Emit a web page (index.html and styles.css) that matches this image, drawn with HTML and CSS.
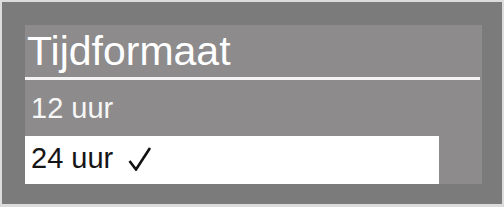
FILE: index.html
```html
<!DOCTYPE html>
<html lang="nl">
<head>
  <meta charset="UTF-8">
  <title>Tijdformaat</title>
  <link rel="stylesheet" href="styles.css">
</head>
<body>
  <div class="frame">
    <div class="panel">
      <h1 class="panel-title">Tijdformaat</h1>
      <div class="option">12 uur</div>
      <div class="option selected">
        <span>24 uur</span>
        <svg class="check" width="24" height="24" viewBox="0 0 24 24">
          <path d="M1.5 14 L8 22.5 L22 1" fill="none" stroke="#111" stroke-width="2.6" stroke-linejoin="miter"/>
        </svg>
      </div>
    </div>
  </div>
</body>
</html>
```

FILE: styles.css
```css
/* Reset */
* {
  margin: 0;
  padding: 0;
  box-sizing: border-box;
}

body {
  background: #dcdcdc;
  font-family: "Liberation Sans", Arial, sans-serif;
  width: 504px;
  height: 207px;
  padding: 2px 2px 3px 2px;
  overflow: hidden;
}

/* Outer frame */
.frame {
  background: #7b7b7b;
  width: 500px;
  height: 202px;
  padding: 23px 20px 20px 23px;
}

/* Menu panel */
.panel {
  background: #8d8b8c;
  width: 457px;
  height: 159px;
  display: flex;
  flex-direction: column;
}

.panel-title {
  font-size: 41px;
  font-weight: normal;
  color: #ffffff;
  line-height: 52px;
  height: 52px;
  padding-left: 2px;
  border-bottom: 3px solid #f4f4f4;
  margin-right: 2px;
  height: 55px;
}

.option {
  font-size: 29px;
  line-height: 33px;
  color: #f6f6f6;
  padding: 12px 0 11px 6px;
  height: 56px;
}

.option.selected {
  background: #ffffff;
  color: #151515;
  width: 414px;
  height: 48px;
  padding: 6px 0 9px 6px;
  display: flex;
  align-items: center;
}

.check {
  margin-left: 15px;
}
```
